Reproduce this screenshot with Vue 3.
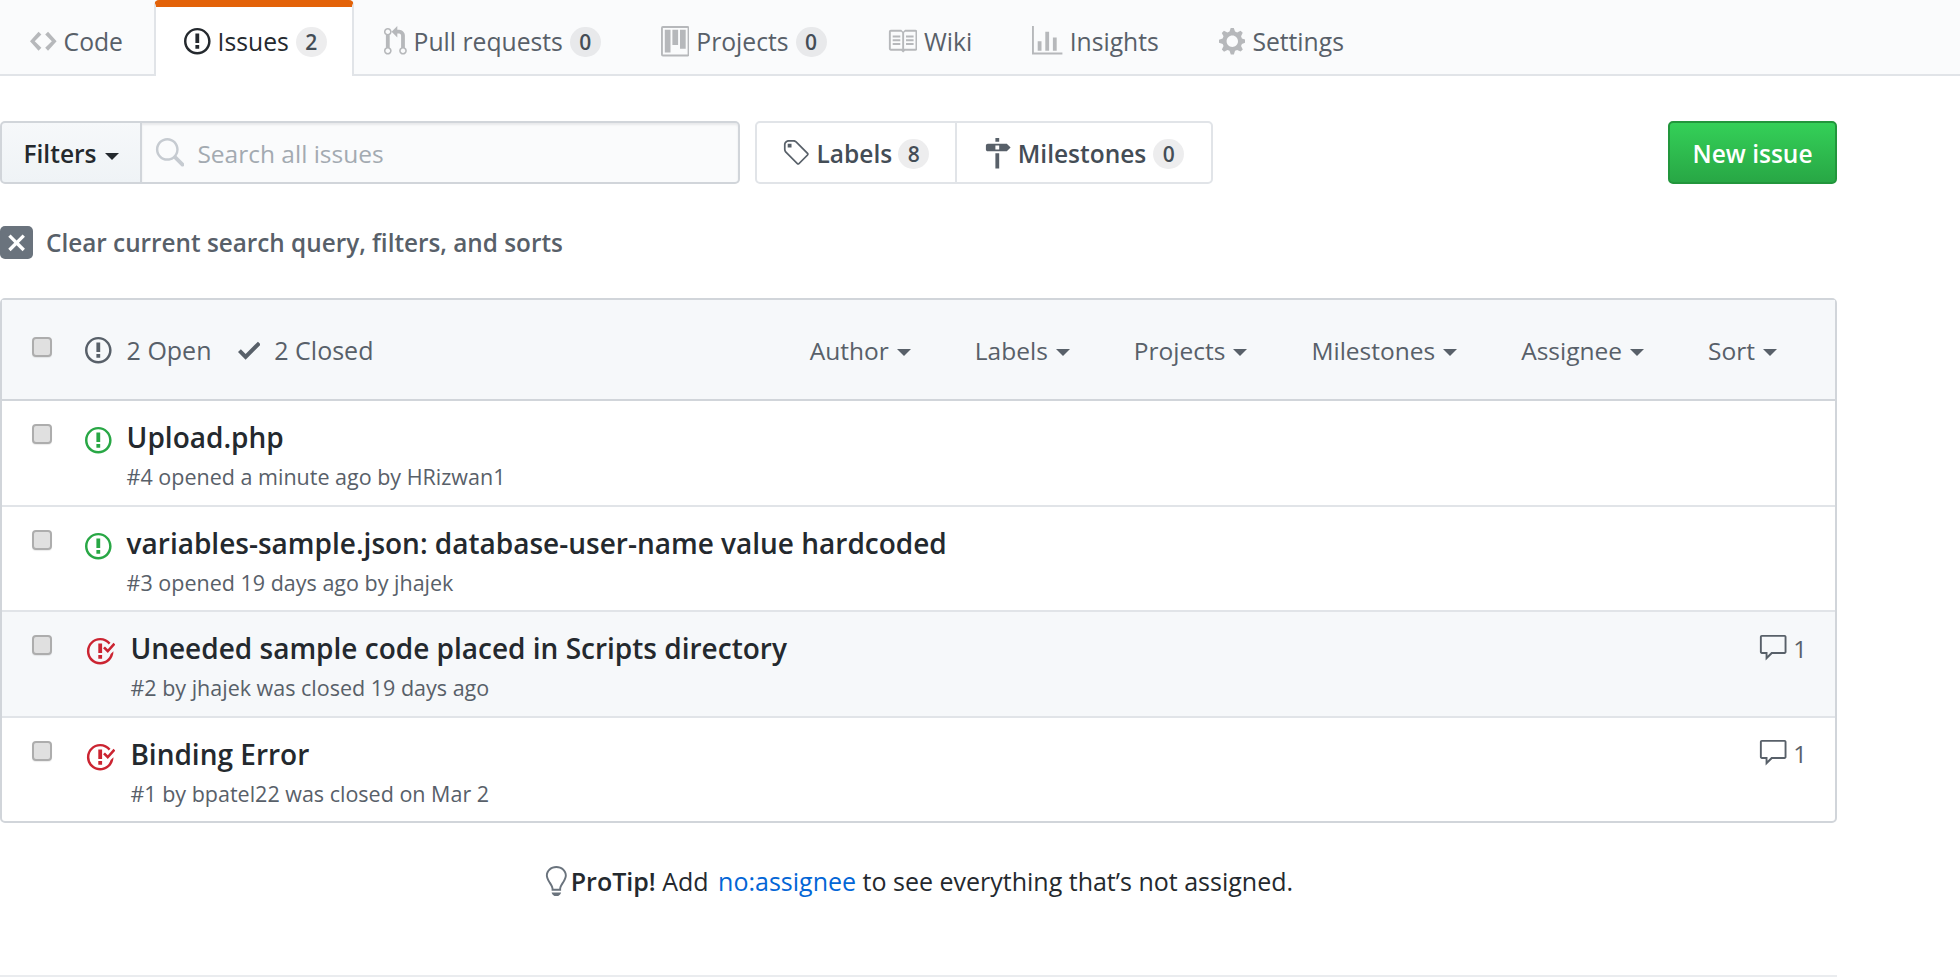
<script setup>
const icons = {
  code: { w: 14, d: 'M9.5 3L8 4.5 11.5 8 8 11.5 9.5 13 14 8 9.5 3zm-5 0L0 8l4.5 5L6 11.5 2.5 8 6 4.5 4.5 3z' },
  issue: { w: 14, d: 'M7 2.3c3.14 0 5.7 2.56 5.7 5.7s-2.56 5.7-5.7 5.7A5.71 5.71 0 0 1 1.3 8c0-3.14 2.56-5.7 5.7-5.7zM7 1C3.14 1 0 4.14 0 8s3.14 7 7 7 7-3.14 7-7-3.14-7-7-7zm1 3H6v5h2V4zm0 6H6v2h2v-2z' },
  pull: { w: 12, d: 'M11 11.28V5c-.03-.78-.34-1.47-.94-2.06C9.46 2.35 8.78 2.03 8 2H7V0L4 3l3 3V4h1c.27.02.48.11.69.31.21.2.3.42.31.69v6.28A1.993 1.993 0 0 0 10 15a1.993 1.993 0 0 0 1-3.72zm-1 2.92c-.66 0-1.2-.55-1.2-1.2 0-.65.55-1.2 1.2-1.2.65 0 1.2.55 1.2 1.2 0 .65-.55 1.2-1.2 1.2zM4 3c0-1.11-.89-2-2-2a1.993 1.993 0 0 0-1 3.72v6.56A1.993 1.993 0 0 0 2 15a1.993 1.993 0 0 0 1-3.72V4.72c.59-.34 1-.98 1-1.72zm-.8 10c0 .66-.55 1.2-1.2 1.2-.65 0-1.2-.55-1.2-1.2 0-.65.55-1.2 1.2-1.2.65 0 1.2.55 1.2 1.2zM2 4.2C1.34 4.2.8 3.65.8 3c0-.65.55-1.2 1.2-1.2.65 0 1.2.55 1.2 1.2 0 .65-.55 1.2-1.2 1.2z' },
  project: { w: 15, d: 'M10 12h3V2h-3v10zm-4-2h3V2H6v8zm-4 4h3V2H2v12zm-1 1h13V1H1v14zM14 0H1a1 1 0 0 0-1 1v14a1 1 0 0 0 1 1h13a1 1 0 0 0 1-1V1a1 1 0 0 0-1-1z' },
  book: { w: 16, d: 'M3 5h4v1H3V5zm0 3h4V7H3v1zm0 2h4V9H3v1zm11-5h-4v1h4V5zm0 2h-4v1h4V7zm0 2h-4v1h4V9zm2-6v9c0 .55-.45 1-1 1H9.5l-1 1-1-1H2c-.55 0-1-.45-1-1V3c0-.55.45-1 1-1h5.5l1 1 1-1H15c.55 0 1 .45 1 1zm-8 .5L7.5 3H2v9h6V3.5zm7-.5H9.5l-.5.5V12h6V3z' },
  graph: { w: 16, d: 'M16 14v1H0V0h1v14h15zM5 13H3V8h2v5zm4 0H7V3h2v10zm4 0h-2V6h2v7z' },
  gear: { w: 14, d: 'M14 8.77v-1.6l-1.94-.64-.45-1.09.88-1.84-1.13-1.13-1.81.91-1.09-.45-.69-1.92h-1.6l-.63 1.94-1.11.45-1.84-.88-1.13 1.13.91 1.81-.45 1.09L0 7.23v1.59l1.94.64.45 1.09-.88 1.84 1.13 1.13 1.81-.91 1.09.45.69 1.92h1.59l.63-1.94 1.11-.45 1.84.88 1.13-1.13-.92-1.81.47-1.09L14 8.75v.02zM7 11c-1.66 0-3-1.34-3-3s1.34-3 3-3 3 1.34 3 3-1.34 3-3 3z' },
  search: { w: 16, d: 'M15.7 13.3l-3.81-3.83A5.93 5.93 0 0 0 13 6c0-3.31-2.69-6-6-6S1 2.69 1 6s2.69 6 6 6c1.3 0 2.48-.41 3.47-1.11l3.83 3.81c.19.2.45.3.7.3.25 0 .52-.09.7-.3a.996.996 0 0 0 0-1.41v.01zM7 10.7c-2.59 0-4.7-2.11-4.7-4.7 0-2.59 2.11-4.7 4.7-4.7 2.59 0 4.7 2.11 4.7 4.7 0 2.59-2.11 4.7-4.7 4.7z' },
  tag: { w: 15, d: 'M7.73 1.73C7.26 1.26 6.62 1 5.96 1H3.5C2.13 1 1 2.13 1 3.5v2.47c0 .66.27 1.3.73 1.77l6.06 6.06c.39.39 1.02.39 1.41 0l4.59-4.59a.996.996 0 0 0 0-1.41L7.73 1.73zM2.38 7.09c-.31-.3-.47-.7-.47-1.13V3.5c0-.88.72-1.59 1.59-1.59h2.47c.42 0 .83.16 1.13.47l6.14 6.13-4.73 4.73-6.13-6.15zM3.01 3h2v2H3V3h.01z' },
  milestone: { w: 14, d: 'M8 2H6V0h2v2zm4 5H2c-.55 0-1-.45-1-1V4c0-.55.45-1 1-1h10l2 2-2 2zM8 4H6v2h2V4zM6 16h2V8H6v8z' },
  check: { w: 12, d: 'M12 5l-8 8-4-4 1.5-1.5L4 10l6.5-6.5L12 5z' },
  x: { w: 12, d: 'M7.48 8l3.75 3.75-1.48 1.48L6 9.48l-3.75 3.75-1.48-1.48L4.52 8 .77 4.25l1.48-1.48L6 6.52l3.75-3.75 1.48 1.48L7.48 8z' },
  closed: { w: 16, d: 'M7 10h2v2H7v-2zm2-6H7v5h2V4zm1.5 1.5l-1 1L12 9l4-4.5-1-1L12 7l-1.5-1.5zM8 13.7A5.71 5.71 0 0 1 2.3 8c0-3.14 2.56-5.7 5.7-5.7 1.83 0 3.45.88 4.5 2.2l.92-.92A6.947 6.947 0 0 0 8 1C4.14 1 1 4.14 1 8s3.14 7 7 7 7-3.14 7-7l-1.52 1.52c-.66 2.41-2.86 4.19-5.48 4.19v-.01z' },
  comment: { w: 16, d: 'M14 1H2c-.55 0-1 .45-1 1v8c0 .55.45 1 1 1h2v3.5L7.5 11H14c.55 0 1-.45 1-1V2c0-.55-.45-1-1-1zm0 9H7l-2 2v-2H2V2h12v8z' },
  bulb: { w: 12, d: 'M6.5 0C3.48 0 1 2.19 1 5c0 .92.55 2.25 1 3 1.34 2.25 1.78 2.78 2 4v1h5v-1c.22-1.22.66-1.75 2-4 .45-.75 1-2.08 1-3 0-2.81-2.48-5-5.5-5zm3.64 7.48c-.25.44-.47.8-.67 1.11-.86 1.41-1.25 2.06-1.45 3.23-.02.05-.02.11-.02.17H5c0-.06 0-.13-.02-.17-.2-1.17-.59-1.83-1.45-3.23-.2-.31-.42-.67-.67-1.11C2.44 6.78 2 5.65 2 5c0-2.2 2.02-4 4.5-4 1.22 0 2.36.42 3.22 1.19C10.55 2.94 11 3.94 11 5c0 .66-.44 1.78-.86 2.48zM4 14h5c-.23 1.14-1.3 2-2.5 2s-2.27-.86-2.5-2z' }
}

const tabs = [
  { label: 'Code', icon: 'code' },
  { label: 'Issues', icon: 'issue', count: 2, active: true },
  { label: 'Pull requests', icon: 'pull', count: 0 },
  { label: 'Projects', icon: 'project', count: 0 },
  { label: 'Wiki', icon: 'book' },
  { label: 'Insights', icon: 'graph' },
  { label: 'Settings', icon: 'gear' }
]

const filters = ['Author', 'Labels', 'Projects', 'Milestones', 'Assignee', 'Sort']

const issues = [
  { title: 'Upload.php', meta: '#4 opened a minute ago by HRizwan1', closed: false },
  { title: 'variables-sample.json: database-user-name value hardcoded', meta: '#3 opened 19 days ago by jhajek', closed: false },
  { title: 'Uneeded sample code placed in Scripts directory', meta: '#2 by jhajek was closed 19 days ago', closed: true, comments: 1, shaded: true },
  { title: 'Binding Error', meta: '#1 by bpatel22 was closed on Mar 2', closed: true, comments: 1 }
]

// octicons are 16 high, the page was captured at about 1.9x
const size = (name, scale = 1.9) => ({ width: icons[name].w * scale, height: 16 * scale })
</script>

<template>
  <div class="page">
    <nav class="tabs">
      <a v-for="t in tabs" :key="t.label" class="tab" :class="{ active: t.active }">
        <svg class="icon" v-bind="size(t.icon)" :viewBox="`0 0 ${icons[t.icon].w} 16`"><path fill-rule="evenodd" :d="icons[t.icon].d" /></svg>
        <span>{{ t.label }}</span>
        <span v-if="t.count !== undefined" class="counter">{{ t.count }}</span>
      </a>
    </nav>

    <div class="toolbar">
      <div class="search-group">
        <button class="filter-btn">Filters<i class="caret"></i></button>
        <div class="search">
          <svg class="search-icon" v-bind="size('search')" viewBox="0 0 16 16"><path fill-rule="evenodd" :d="icons.search.d" /></svg>
          <span>Search all issues</span>
        </div>
      </div>
      <div class="nav-group">
        <a class="nav-item labels">
          <svg v-bind="size('tag')" viewBox="0 0 15 16"><path fill-rule="evenodd" :d="icons.tag.d" /></svg>
          <span>Labels</span><span class="counter">8</span>
        </a>
        <a class="nav-item milestones">
          <svg v-bind="size('milestone')" viewBox="0 0 14 16"><path fill-rule="evenodd" :d="icons.milestone.d" /></svg>
          <span>Milestones</span><span class="counter">0</span>
        </a>
      </div>
      <button class="new-issue">New issue</button>
    </div>

    <div class="clear">
      <span class="clear-icon"><svg v-bind="size('x', 1.6)" viewBox="0 0 12 16"><path :d="icons.x.d" /></svg></span>
      <span>Clear current search query, filters, and sorts</span>
    </div>

    <div class="box">
      <div class="box-header">
        <input type="checkbox" class="check" />
        <span class="state">
          <svg v-bind="size('issue')" viewBox="0 0 14 16"><path fill-rule="evenodd" :d="icons.issue.d" /></svg>
          <span>2 Open</span>
        </span>
        <span class="state closed-state">
          <svg v-bind="size('check')" viewBox="0 0 12 16"><path :d="icons.check.d" /></svg>
          <span>2 Closed</span>
        </span>
        <div class="filters">
          <span v-for="f in filters" :key="f">{{ f }}<i class="caret"></i></span>
        </div>
      </div>
      <div v-for="it in issues" :key="it.title" class="row" :class="{ shaded: it.shaded }">
        <input type="checkbox" class="check" />
        <svg v-if="it.closed" class="state-icon red" v-bind="size('closed')" viewBox="0 0 16 16"><path fill-rule="evenodd" :d="icons.closed.d" /></svg>
        <svg v-else class="state-icon green" v-bind="size('issue')" viewBox="0 0 14 16"><path fill-rule="evenodd" :d="icons.issue.d" /></svg>
        <div class="row-main">
          <div class="title">{{ it.title }}</div>
          <div class="meta">{{ it.meta }}</div>
        </div>
        <div v-if="it.comments" class="comments">
          <svg v-bind="size('comment')" viewBox="0 0 16 16"><path fill-rule="evenodd" :d="icons.comment.d" /></svg>
          <span>{{ it.comments }}</span>
        </div>
      </div>
    </div>

    <div class="protip">
      <svg v-bind="size('bulb')" viewBox="0 0 12 16"><path fill-rule="evenodd" :d="icons.bulb.d" /></svg>
      <p><strong>ProTip!</strong> Add <a>no:assignee</a> to see everything that’s not assigned.</p>
    </div>
    <div class="foot-line"></div>
  </div>
</template>

<style scoped>
.page {
  font-family: "Open Sans", "Noto Sans", sans-serif;
  font-size: 24.5px;
  color: #24292e;
  height: 979px;
  overflow: hidden;
  background: #fff;
}
svg {
  fill: currentColor;
  flex: none;
}

/* tabs */
.tabs {
  display: flex;
  height: 74px;
  font-size: 24.7px;
  background: #fafbfc;
  border-bottom: 2px solid #e1e4e8;
}
.tab {
  display: flex;
  align-items: center;
  height: 76px;
  padding: 0 28px;
  gap: 7px;
  color: #586069;
  box-sizing: border-box;
  border: solid transparent;
  border-width: 7px 2px 0;
  border-radius: 5px 5px 0 0;
}
.tab:first-child {
  padding-right: 29px;
}
.tab .icon {
  color: rgba(27, 31, 35, 0.3);
}
.tab.active {
  padding-right: 25px;
  color: #24292e;
  background: #fff;
  border-color: #e36209 #e1e4e8 transparent;
}
.tab.active .icon {
  color: #24292e;
}
.counter {
  display: inline-block;
  min-width: 31px;
  height: 30px;
  line-height: 30px;
  text-align: center;
  font-size: 21px;
  font-weight: 600;
  color: #444d56;
  background: rgba(27, 31, 35, 0.08);
  border-radius: 15px;
}

/* toolbar */
.toolbar {
  display: flex;
  margin-top: 45px;
  height: 63px;
  padding-right: 123px;
}
.search-group {
  display: flex;
  width: 740px;
}
.filter-btn {
  width: 142px;
  font: inherit;
  font-weight: 600;
  color: #24292e;
  background: linear-gradient(#f6f8fa, #eff3f6);
  border: 2px solid #d1d5da;
  border-radius: 5px 0 0 5px;
  padding: 2px 0 0;
}
.search {
  flex: 1;
  display: flex;
  align-items: center;
  gap: 13px;
  padding: 2px 0 0 12px;
  color: #a3aab1;
  background: #fafbfc;
  border: 2px solid #d1d5da;
  border-left: 0;
  border-radius: 0 5px 5px 0;
  box-shadow: inset 0 2px 2px rgba(27, 31, 35, 0.075);
}
.search-icon {
  color: #c6cbd1;
}
.nav-group {
  display: flex;
  margin-left: 15px;
  border: 2px solid #e1e4e8;
  border-radius: 5px;
}
.nav-item {
  display: flex;
  align-items: center;
  gap: 6px;
  padding: 2px 26px 0 25px;
  font-weight: 600;
  color: #444d56;
}
.nav-item svg {
  color: #586069;
}
.nav-item.labels {
  border-right: 2px solid #e1e4e8;
}
.nav-item.milestones {
  padding: 2px 27px 0 27px;
  gap: 7px;
}
.new-issue {
  margin-left: auto;
  width: 169px;
  font: inherit;
  font-weight: 600;
  color: #fff;
  background: linear-gradient(#34d058, #28a745);
  border: 2px solid #22963c;
  border-radius: 5px;
  padding: 2px 0 0;
}
.caret {
  display: inline-block;
  margin-left: 8px;
  vertical-align: middle;
  border: 7px solid transparent;
  border-top-color: currentColor;
  border-bottom: 0;
}

/* clear */
.clear {
  display: flex;
  align-items: center;
  gap: 13px;
  margin-top: 42px;
  height: 33px;
  font-size: 24.3px;
  font-weight: 600;
  color: #586069;
}
.clear-icon {
  display: flex;
  align-items: center;
  justify-content: center;
  width: 33px;
  height: 33px;
  color: #fff;
  background: #6a737d;
  border-radius: 5px;
}

/* issue box */
.box {
  width: 1837px;
  box-sizing: border-box;
  margin-top: 39px;
  border: 2px solid #d1d5da;
  border-radius: 5px;
}
.box-header {
  display: flex;
  align-items: center;
  height: 101px;
  box-sizing: border-box;
  padding: 1px 0 0 30px;
  color: #586069;
  background: #f6f8fa;
  border-bottom: 2px solid #d1d5da;
}
.check {
  appearance: none;
  flex: none;
  width: 20px;
  height: 20px;
  margin: 0;
  background: #e0e0e0;
  border: 2px solid #adadad;
  border-radius: 4px;
  box-shadow: 0 1px 1px rgba(0, 0, 0, 0.08);
}
.box-header .check {
  margin-top: -6px;
}
.state {
  display: flex;
  align-items: center;
  gap: 15px;
  margin-left: 33px;
  font-size: 25px;
}
.closed-state {
  margin-left: 26px;
  gap: 14px;
}
.filters {
  display: flex;
  gap: 64px;
  margin-left: auto;
  padding-right: 58px;
}
.row {
  display: flex;
  height: 105.5px;
  box-sizing: border-box;
  padding: 17px 0 0 30px;
  border-bottom: 2px solid #e1e4e8;
}
.row:last-child {
  border-bottom: 0;
  height: 103.5px;
}
.row.shaded {
  background: #f6f8fa;
}
.row .check {
  margin-top: 6px;
}
.state-icon {
  margin: 7px 0 0 33px;
}
.green {
  color: #28a745;
}
.red {
  color: #cb2431;
}
.row-main {
  margin-left: 15px;
}
.title {
  font-size: 28px;
  line-height: 38px;
  font-weight: 600;
}
.meta {
  margin-top: 7px;
  font-size: 21.5px;
  line-height: 28px;
  color: #586069;
}
.comments {
  display: flex;
  align-items: center;
  gap: 5px;
  height: 30px;
  margin: 4px 28px 0 auto;
  font-size: 24px;
  color: #586069;
}

/* protip */
.protip {
  display: flex;
  justify-content: center;
  align-items: center;
  gap: 4px;
  width: 1837px;
  margin-top: 41px;
  font-size: 25px;
}
.protip p {
  margin: 0;
}
.protip svg {
  color: #6a737d;
}
.protip a {
  margin-left: 3px;
  color: #0366d6;
}
.protip strong {
  font-weight: 600;
}
.foot-line {
  width: 1837px;
  height: 2px;
  margin-top: 77px;
  background: #eaecef;
}
</style>

<style>
body {
  background: #fff;
}
</style>
